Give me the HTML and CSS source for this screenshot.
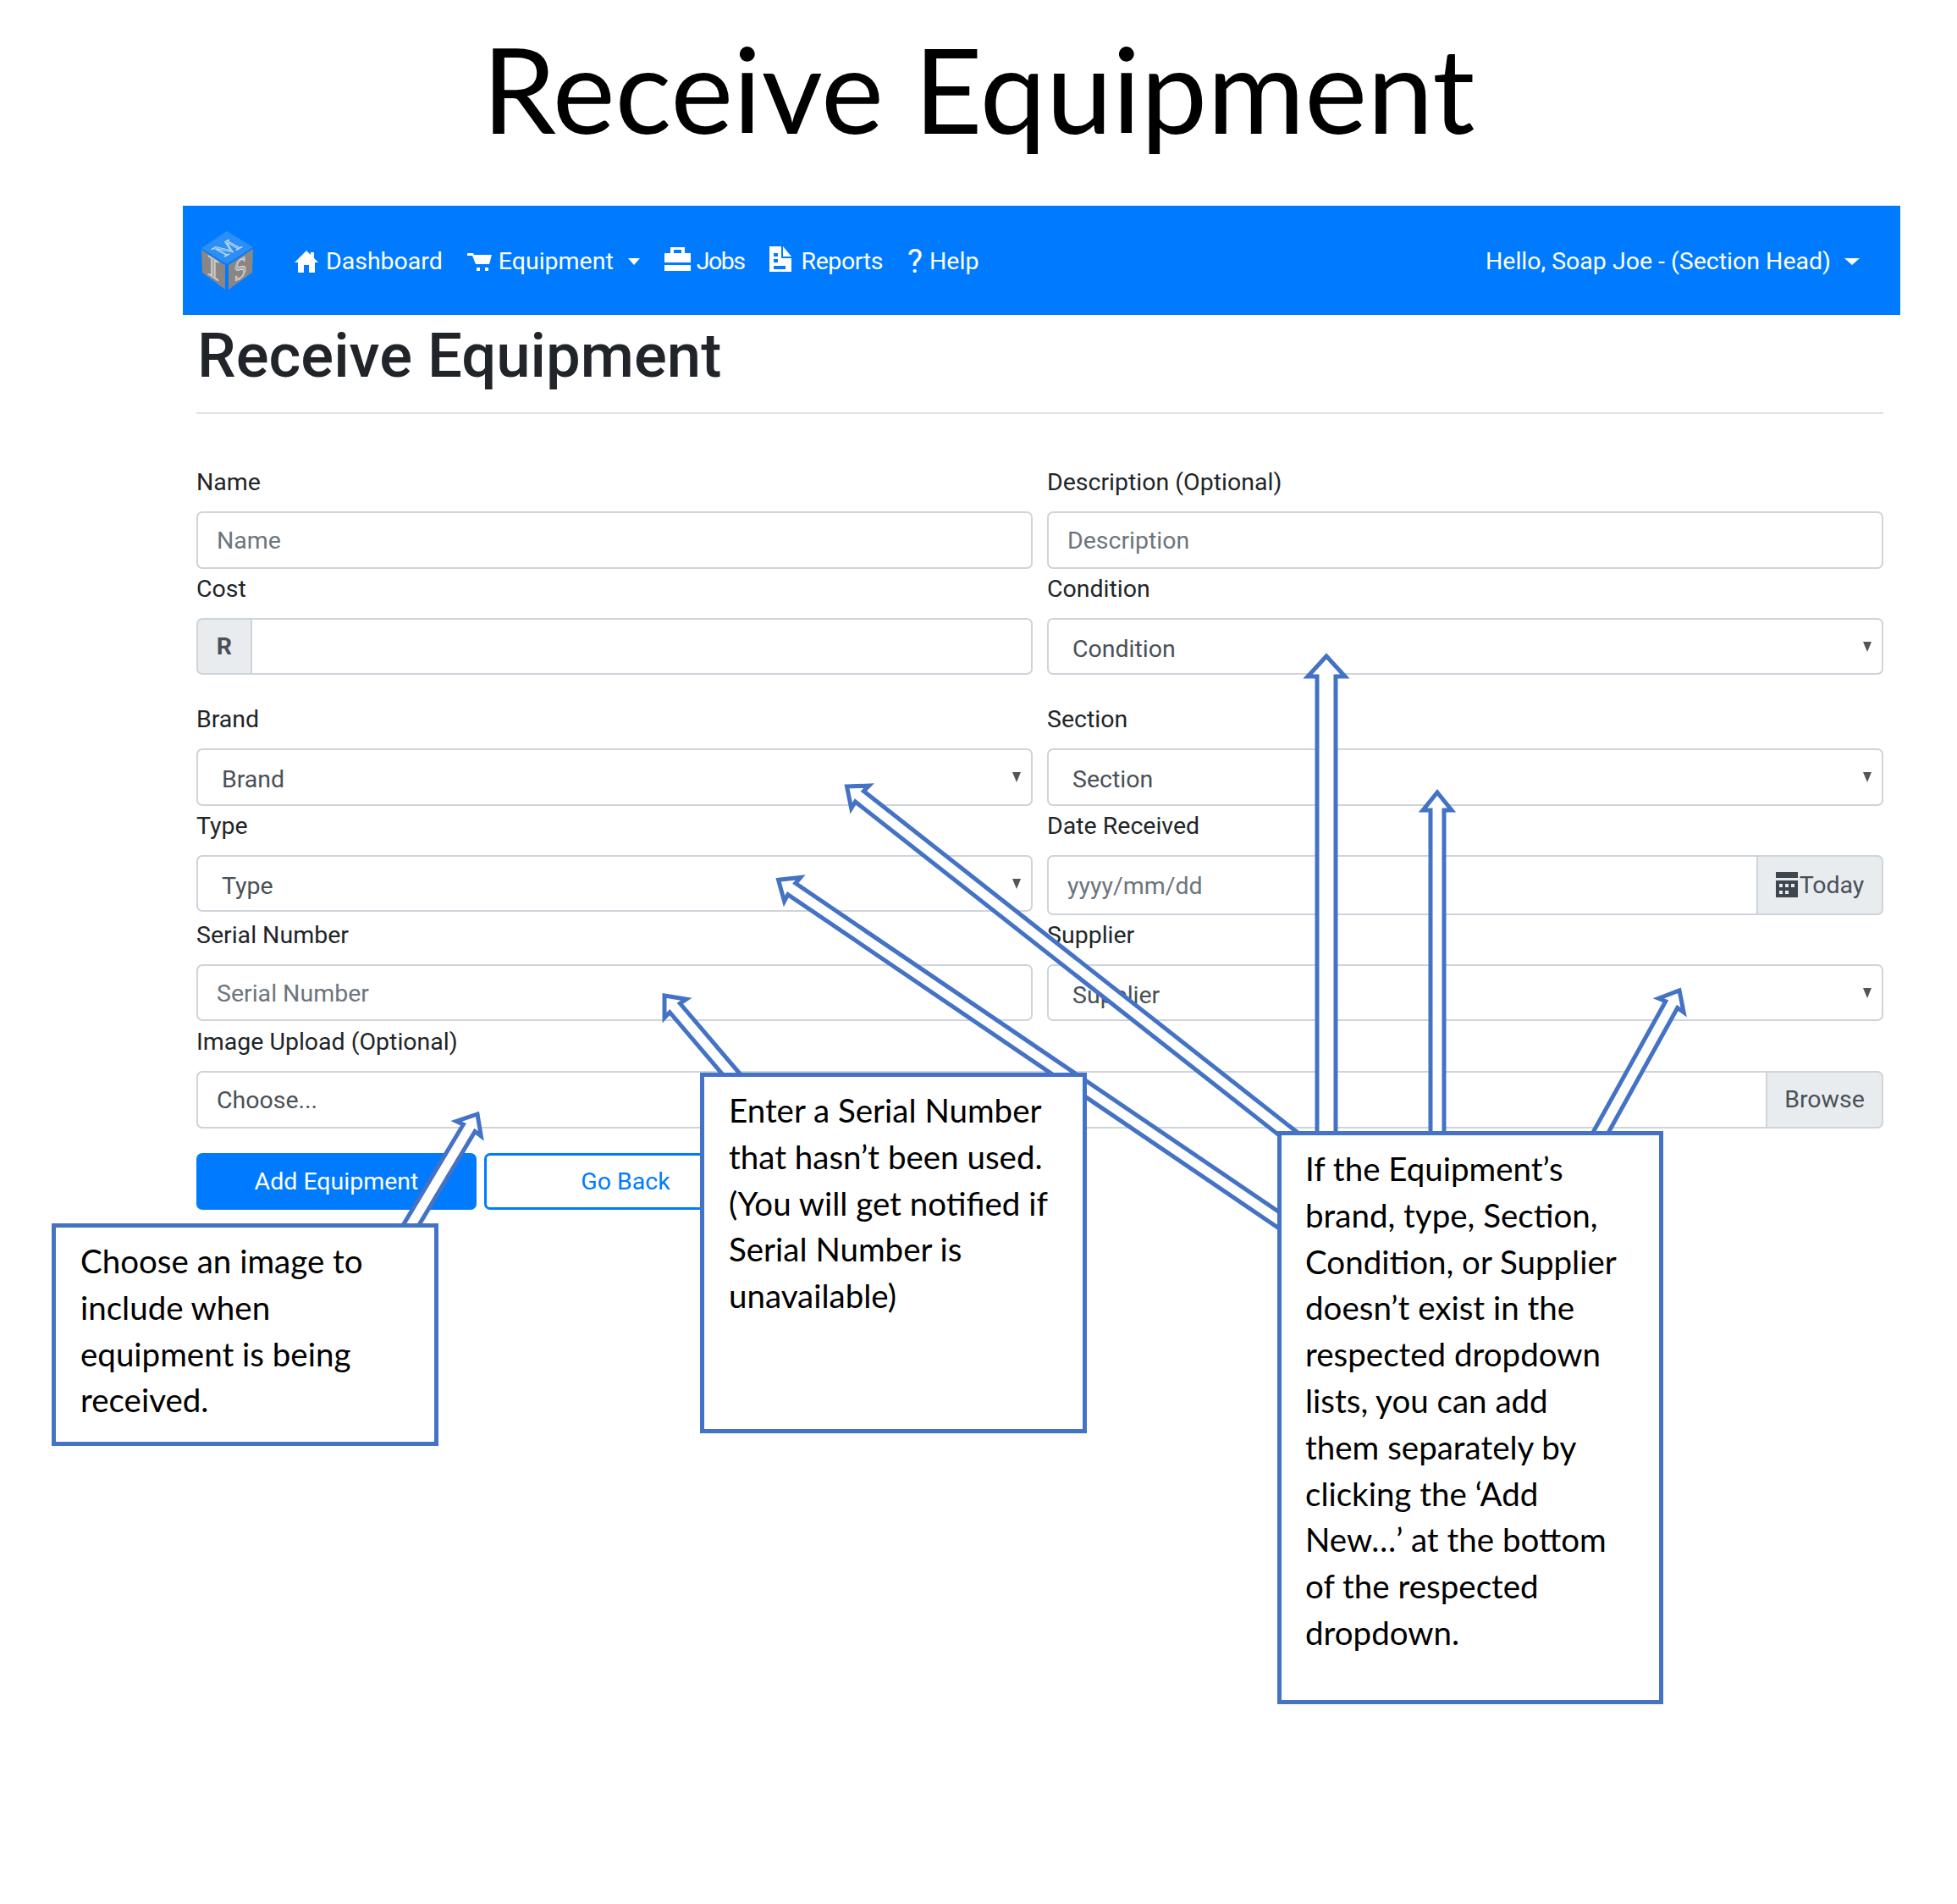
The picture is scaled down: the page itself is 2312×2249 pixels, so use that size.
FILE: index.html
```html
<!DOCTYPE HTML>
<html>
<head>
<meta charset="utf-8">
<title>Receive Equipment</title>
<link rel="stylesheet" href="styles.css">
</head>

<body>
<div class="page">
	<h1 class="slide-title">Receive Equipment</h1>

	<div class="screen">
		<nav class="navbar">
			<svg class="logo" viewBox="0 0 62 69">
				<polygon points="30,0 61,19 30,39 0,20" fill="#2b8ff5"/>
				<polygon points="0,22 28,40 28,69 1,49" fill="#8b8684"/>
				<polygon points="61,21 32,40 32,69 60,49" fill="#8b8684"/>
				<text class="logo-letter logo-m" transform="matrix(0.9 -0.5 0.9 0.5 27 30.5)">M</text>
				<text class="logo-letter" transform="matrix(1.3 0.85 0 1 6.5 50)">I</text>
				<text class="logo-letter" transform="matrix(0.8 -0.55 0 1 38.4 60.7)">S</text>
			</svg>
			<a class="nav-link"><svg class="icon" viewBox="0 0 28 26"><path d="M14 0 L19 5 V2 H23 V9 L28 14 H24 V26 H17 V17 H11 V26 H4 V14 H0 Z"/></svg>Dashboard</a>
			<a class="nav-link"><svg class="icon icon-cart" viewBox="0 0 29 26"><path d="M0 3 H7 L8 5 H29 L26 16 H10 L6 6 H0 Z"/><rect x="11" y="20" width="4" height="4"/><rect x="21" y="20" width="4" height="4"/></svg>Equipment<span class="caret"></span></a>
			<a class="nav-link nav-jobs"><svg class="icon icon-case" viewBox="0 0 31 28"><path fill-rule="evenodd" d="M7 7 V0 H24 V7 H31 V18 H0 V7 Z M11 3 V7 H20 V3 Z"/><rect y="21" width="31" height="7"/></svg>Jobs</a>
			<a class="nav-link nav-reports"><svg class="icon icon-file" viewBox="0 0 26 30"><path fill-rule="evenodd" d="M0 0 H14 V14 H26 V30 H0 Z M5 8 V12 H10 V8 Z M5 15 V19 H10 V15 Z M5 23 V27 H19 V23 Z"/><polygon points="16,0 26,12 16,12"/></svg>Reports</a>
			<a class="nav-link"><span class="help-mark">?</span>Help</a>
			<a class="nav-link nav-user">Hello, Soap Joe - (Section Head)<span class="caret caret-user"></span></a>
		</nav>

		<div class="content">
			<h2 class="page-title">Receive Equipment</h2>
			<hr class="rule">

			<div class="row">
				<div class="cell">
					<label>Name</label>
					<input type="text" placeholder="Name">
				</div>
				<div class="cell">
					<label>Description (Optional)</label>
					<input type="text" placeholder="Description">
				</div>
			</div>

			<div class="row row-end">
				<div class="cell">
					<label>Cost</label>
					<div class="group">
						<span class="addon addon-r">R</span>
						<input type="text">
					</div>
				</div>
				<div class="cell">
					<label>Condition</label>
					<div class="picker">Condition</div>
				</div>
			</div>

			<div class="row">
				<div class="cell">
					<label>Brand</label>
					<div class="picker">Brand</div>
				</div>
				<div class="cell">
					<label>Section</label>
					<div class="picker">Section</div>
				</div>
			</div>

			<div class="row">
				<div class="cell">
					<label>Type</label>
					<div class="picker">Type</div>
				</div>
				<div class="cell">
					<label>Date Received</label>
					<div class="group group-tall">
						<input type="text" placeholder="yyyy/mm/dd">
						<span class="addon addon-today"><svg class="icon-cal" viewBox="0 0 26 30"><rect width="26" height="7"/><path fill-rule="evenodd" d="M0 10 H26 V30 H0 Z M4 14 V18 H8 V14 Z M11 14 V18 H15 V14 Z M18 14 V18 H22 V14 Z M4 22 V26 H8 V22 Z M11 22 V26 H15 V22 Z"/></svg>Today</span>
					</div>
				</div>
			</div>

			<div class="row row-serial">
				<div class="cell">
					<label>Serial Number</label>
					<input type="text" placeholder="Serial Number">
				</div>
				<div class="cell">
					<label>Supplier</label>
					<div class="picker">Supplier</div>
				</div>
			</div>

			<div class="row">
				<div class="cell cell-upload">
					<label>Image Upload (Optional)</label>
					<div class="group">
						<span class="file-text">Choose...</span>
						<span class="addon addon-browse">Browse</span>
					</div>
				</div>
			</div>

			<div class="actions">
				<a class="btn btn-add">Add Equipment</a>
				<a class="btn btn-back">Go Back</a>
			</div>
		</div>
	</div>

	<!-- arrows: drawn pointing up from the tip, then turned to the box they come from -->
	<svg class="arrows" viewBox="0 0 2312 2249">
		<g transform="translate(1567 775)"><polygon points="0,0 22,24 11,24 11,570 -11,570 -11,24 -22,24"/></g>
		<g transform="translate(1698 936)"><polygon points="0,0 17,21 8,21 8,410 -8,410 -8,21 -17,21"/></g>
		<g transform="translate(1984 1170) rotate(29)"><polygon points="0,0 17,20 8,19 8,200 -8,200 -8,19 -17,20"/></g>
		<g transform="translate(1000.5 929) rotate(-51.8)"><polygon points="0,0 17,20 8,19 8,672 -8,672 -8,19 -17,20"/></g>
		<g transform="translate(919.6 1039.3) rotate(-55.8)"><polygon points="0,0 17,20 8,19 8,730 -8,730 -8,19 -17,20"/></g>
		<g transform="translate(785 1176) rotate(-40.4)"><polygon points="0,0 17,20 8,19 8,130 -8,130 -8,19 -17,20"/></g>
		<g transform="translate(564 1316) rotate(30.9)"><polygon points="0,0 17,20 8,19 8,160 -8,160 -8,19 -17,20"/></g>
	</svg>

	<div class="note note-image">Choose an image to include when equipment is being received.</div>
	<div class="note note-serial">Enter a Serial Number that hasn’t been used. (You will get notified if Serial Number is unavailable)</div>
	<div class="note note-new">If the Equipment’s brand, type, Section, Condition, or Supplier doesn’t exist in the respected dropdown lists, you can add them separately by clicking the ‘Add New…’ at the bottom of the respected dropdown.</div>
</div>
</body>
</html>
```

FILE: styles.css
```css
* {margin:0; padding:0; box-sizing:border-box;}
body {background:#fff; font-family:Roboto, "Liberation Sans", sans-serif; font-size:28.5px; color:#212529;}

.page {position:relative; width:2312px; height:2249px; overflow:hidden;}
.slide-title {height:243px; padding-top:14px; text-align:center; font-family:Lato, sans-serif; font-weight:400; font-size:140px; line-height:180px; color:#000;}

.screen {margin-left:216px; width:2029px;}

/* navbar */
.navbar {display:flex; align-items:center; gap:29px; height:129px; padding:2px 48px 0 22px; background:#007bff; color:#fff;}
.logo {width:62px; height:69px; margin-right:19px; margin-top:-2px;}
.logo-letter {font-family:"Liberation Serif", serif; font-size:34px; fill:#dfe6ee; fill-opacity:0.4; stroke:#e8eef5; stroke-width:0.6;}
.logo-m {font-size:27px;}
.nav-link {display:flex; align-items:center; white-space:nowrap;}
.nav-jobs {letter-spacing:-1.5px;}
.nav-reports {letter-spacing:-0.4px;}
.nav-user {margin-left:auto;}
.icon {width:28px; height:26px; margin-right:9px; fill:#fff;}
.icon-cart {width:29px; margin-right:8px;}
.icon-case {width:31px; height:28px; margin-right:7px; margin-top:-6px;}
.icon-file {width:26px; height:30px; margin-right:12px; margin-top:-6px;}
.help-mark {width:18px; margin-right:8px; font-size:38px; line-height:1;}
.caret {width:0; height:0; margin-left:17px; border-top:8px solid #fff; border-left:7.5px solid transparent; border-right:7.5px solid transparent;}
.caret-user {margin-left:16px; border-left-width:9px; border-right-width:9px;}

/* form */
.content {padding:0 20px 0 16px;}
.page-title {margin-top:6px; font-size:72.5px; font-weight:500; line-height:85px; padding-left:1px;}
.rule {margin:24px 0 58px; border:0; border-top:2px solid #e1e1e1;}

.row {display:grid; grid-template-columns:988px 988px; gap:17px; margin-bottom:1px;}
.row-end {margin-bottom:30px;}
.row-serial {margin-bottom:2px;}
.cell-upload {grid-column:1 / 3;}
label {display:block; height:43px; line-height:45px; margin-bottom:14px;}

input, .picker, .file-text {
	display:block; width:100%; height:67.5px; padding:2px 22px 0;
	border:2px solid #ced4da; border-radius:7px; background:#fff;
	font:inherit; line-height:61.5px; color:#495057; outline:none;
}
input::placeholder {color:#6c757d; opacity:1;}

.picker {position:relative; padding-left:28px; padding-top:4px;}
.picker::after {content:""; position:absolute; right:12px; top:26px; border-top:12px solid #555; border-left:5px solid transparent; border-right:5px solid transparent;}

.group {display:flex; height:67.5px;}
.group input, .group .file-text {flex:1; min-width:0;}
.group-tall, .group-tall input {height:71px;}
.addon {display:flex; align-items:center; justify-content:center; border:2px solid #ced4da; background:#e9ecef; color:#495057;}
.addon-r {width:64px; border-radius:7px 0 0 7px; font-weight:700; border-right:0;}
.addon-r + input {border-radius:0 7px 7px 0;}
.addon-today {width:148px; border-radius:0 7px 7px 0; border-left:0;}
.group-tall input {border-radius:7px 0 0 7px;}
.addon-browse {width:137px; border-radius:0 7px 7px 0; border-left:0;}
.file-text {border-radius:7px 0 0 7px; color:#495057;}
.icon-cal {width:26px; height:30px; margin-right:2px; fill:#3f474e;}

.actions {display:flex; gap:9px; margin-top:29px;}
.btn {display:flex; align-items:center; justify-content:center; height:67.5px; border:3px solid #007bff; border-radius:7px;}
.btn-add {width:331px; background:#007bff; color:#fff;}
.btn-back {width:334px; background:#fff; color:#007bff;}

/* overlay: the slide's arrows and text boxes */
.arrows {position:absolute; left:0; top:0; width:2312px; height:2249px;}
.arrows polygon {fill:#fff; stroke:#4472c4; stroke-width:5; stroke-miterlimit:6;}

.note {position:absolute; padding:12px 29px; border:5px solid #4472c4; background:#fff; font-family:Lato, sans-serif; font-size:38.5px; line-height:54.8px; color:#000;}
.note-image {left:61px; top:1445px; width:457px; height:263px;}
.note-serial {left:827px; top:1267px; width:457px; height:426px;}
.note-new {left:1509px; top:1336px; width:456px; height:677px; padding-left:28px; padding-right:43px;}
```
